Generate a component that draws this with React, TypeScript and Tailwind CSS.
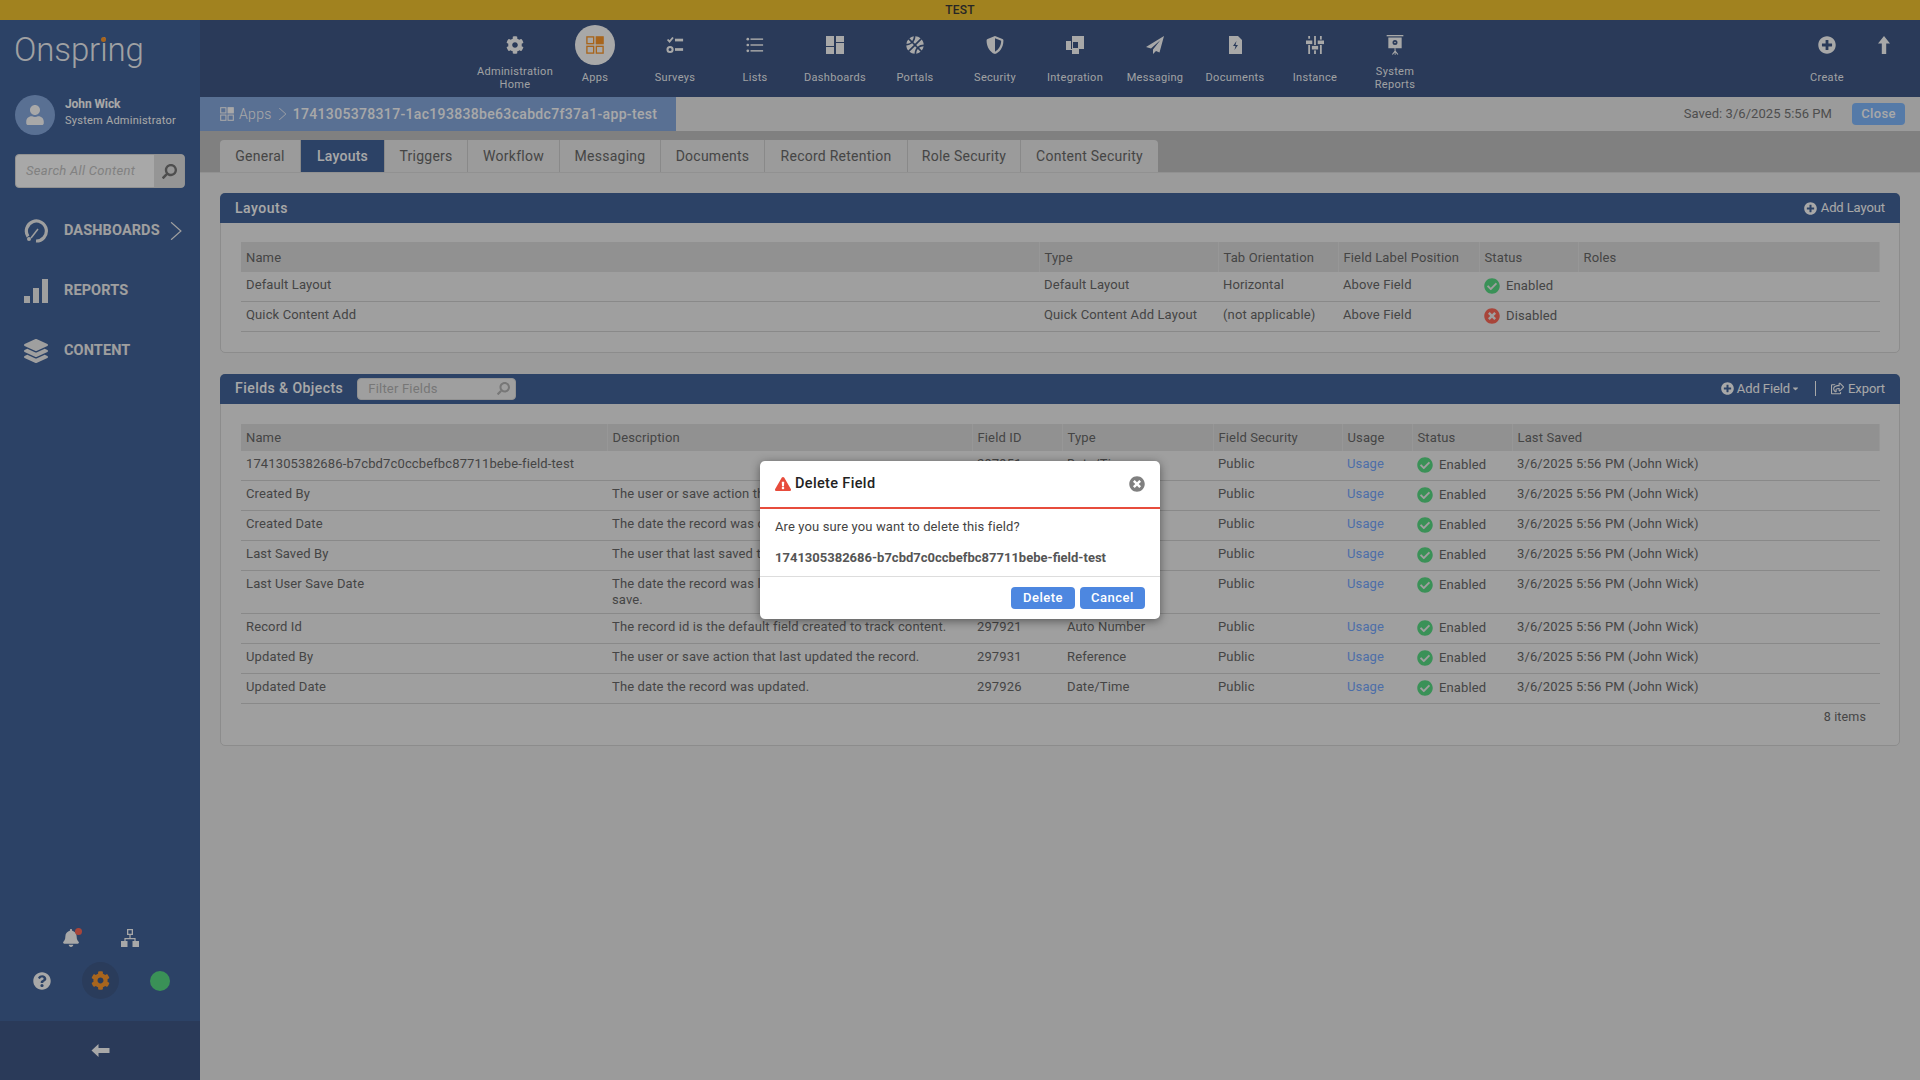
import React from "react";
import {
  FaCog, FaBell, FaQuestionCircle, FaPlusCircle, FaTimesCircle, FaCheckCircle,
  FaExclamationTriangle, FaSearch, FaUser, FaLayerGroup, FaBasketballBall,
  FaShieldAlt, FaRegShareSquare, FaCaretDown,
} from "react-icons/fa";

const Surveys = () => (
  <svg width="18" height="18" viewBox="0 0 20 20" fill="currentColor">
    <path d="M1 4.500l1.600-1.300 1.300 1.500L7 1l1.600 1.300-4.600 5.400z" />
    <rect x="10" y="3" width="9" height="3" />
    <path fillRule="evenodd" d="M4.500 11a4 4 0 110 8 4 4 0 010-8zm0 2.300a1.700 1.700 0 100 3.400 1.700 1.700 0 000-3.400z" />
    <rect x="10" y="13.500" width="9" height="3" />
  </svg>
);
const Lists = () => (
  <svg width="18" height="18" viewBox="0 0 20 20" fill="currentColor">
    <circle cx="2" cy="3.500" r="1.500" /><rect x="5" y="2.700" width="14" height="1.600" />
    <circle cx="2" cy="10" r="1.500" /><rect x="5" y="9.200" width="14" height="1.600" />
    <circle cx="2" cy="16.500" r="1.500" /><rect x="5" y="15.700" width="14" height="1.600" />
  </svg>
);
const Dash = () => (
  <svg width="18" height="18" viewBox="0 0 18 18" fill="currentColor">
    <rect x="0" y="0" width="8" height="10" /><rect x="0" y="11" width="8" height="7" />
    <rect x="10" y="0" width="8" height="6" /><rect x="10" y="7" width="8" height="11" />
  </svg>
);
const Integration = () => (
  <svg width="18" height="18" viewBox="0 0 18 18" fill="currentColor">
    <path d="M6 0h12v13h-5V5H6z" />
    <path d="M0 5h5v8h8v5H6v-4H0z" />
    <path fillRule="evenodd" d="M6 5h7v8H6zM7 6v6h5V6z" />
  </svg>
);
const Plane = () => (
  <svg width="18" height="18" viewBox="0 0 18 18" fill="currentColor">
    <path d="M18 0L0 11l5 1.500L14.500 4 7 13.500V18l3-3 3.500 1.500z" />
  </svg>
);
const Doc = () => (
  <svg width="13" height="18" viewBox="0 0 13 18" fill="currentColor">
    <path fillRule="evenodd" d="M0 0h9l4 4v14H0zM7.500 5L4 10h2.500L5.500 14 9 9H6.500z" />
  </svg>
);
const Sliders = () => (
  <svg width="18" height="18" viewBox="0 0 20 20" fill="currentColor">
    <rect x="2.500" y="0" width="2" height="3" /><rect x="0" y="5" width="7" height="4" /><rect x="2.500" y="10" width="2" height="10" />
    <rect x="9" y="0" width="2" height="10" /><rect x="6.500" y="11" width="7" height="4" /><rect x="9" y="16" width="2" height="4" />
    <rect x="15.500" y="0" width="2" height="4" /><rect x="13" y="5" width="7" height="4" /><rect x="15.500" y="10" width="2" height="10" />
  </svg>
);
const Report = () => (
  <svg width="18" height="20" viewBox="0 0 20 24" fill="currentColor">
    <rect x="0" y="0" width="20" height="1.600" />
    <path fillRule="evenodd" d="M2 3h16v13H2zM10 6a3 3 0 100 6 3 3 0 000-6zM10 8a1 1 0 110 2 1 1 0 010-2z" />
    <path d="M9.300 16h1.400v3l3.300 4-1 .7-2.300-2.700-.1 3h-.9l-.1-3-2.300 2.700-1-.7 3.300-4z" />
  </svg>
);
const AppsIcon = ({ size = 18, fill = "#ff9a2c" }: { size?: number; fill?: string }) => (
  <svg width={size} height={size} viewBox="0 0 20 20" fill="none" stroke={fill} strokeWidth="1.500">
    <rect x="1" y="1" width="7.500" height="7.500" />
    <rect x="11.500" y="1" width="7.500" height="7.500" fill={fill} />
    <rect x="1" y="11.500" width="7.500" height="7.500" />
    <rect x="11.500" y="11.500" width="7.500" height="7.500" />
  </svg>
);
const ArrowUp = () => (
  <svg width="12" height="18" viewBox="0 0 12 18" fill="currentColor"><path d="M6 0l6 7.500H8.200V18H3.800V7.500H0z" /></svg>
);
const Gauge = () => (
  <svg width="24" height="24" viewBox="0 0 24 24" fill="none" stroke="currentColor" strokeWidth="3.200">
    <path d="M4 17.500A10 10 0 1112 22" />
    <path d="M7 19l7-9" strokeWidth="1.500" />
    <circle cx="5" cy="20" r="2" fill="currentColor" stroke="none" />
  </svg>
);
const Bars = () => (
  <svg width="24" height="24" viewBox="0 0 24 24" fill="currentColor">
    <rect x="0" y="17" width="6" height="7" /><rect x="9" y="9" width="6" height="15" /><rect x="18" y="0" width="6" height="24" />
  </svg>
);
const OrgChart = () => (
  <svg width="18" height="18" viewBox="0 0 18 18" fill="currentColor">
    <path fillRule="evenodd" d="M6 0h6v6H6zM7.300 1.300v3.400h3.400V1.300z" />
    <path d="M8.400 6h1.200v3h5v3h-1.200v-1.800H4.600V12H3.400V9h5z" />
    <rect x="0" y="12" width="6.500" height="6" /><rect x="11.500" y="12" width="6.500" height="6" />
  </svg>
);
const Chevron = ({ size = 16 }: { size?: number }) => (
  <svg width={size / 2 + 3} height={size} viewBox="0 0 11 16" fill="none" stroke="currentColor" strokeWidth="1.100"><path d="M1 0l9 8-9 8" /></svg>
);

const navItems: [React.ReactNode, string[]][] = [
  [<FaCog size={18} />, ["Administration", "Home"]],
  [<span className="flex h-10 w-10 -my-2.5 items-center justify-center rounded-full bg-white"><AppsIcon /></span>, ["Apps"]],
  [<Surveys />, ["Surveys"]],
  [<Lists />, ["Lists"]],
  [<Dash />, ["Dashboards"]],
  [<FaBasketballBall size={18} />, ["Portals"]],
  [<FaShieldAlt size={18} />, ["Security"]],
  [<Integration />, ["Integration"]],
  [<Plane />, ["Messaging"]],
  [<Doc />, ["Documents"]],
  [<Sliders />, ["Instance"]],
  [<Report />, ["System", "Reports"]],
];

const NavItem = ({ icon, label, w = "w-[80px]" }: { icon: React.ReactNode; label: string[]; w?: string }) => (
  <div className={`flex ${w} shrink-0 flex-col items-center`}>
    <div className="flex h-[50px] items-center justify-center text-white">{icon}</div>
    <div className="-mt-[6px] flex h-[27px] flex-col justify-center text-center text-[11px] leading-[13px] tracking-[.3px] text-white/95">
      {label.map((l) => <span key={l}>{l}</span>)}
    </div>
  </div>
);

const tabs: [string, string][] = [
  ["General", "w-[81px]"], ["Layouts", "w-[84px]"], ["Triggers", "w-[83px]"], ["Workflow", "w-[92px]"],
  ["Messaging", "w-[101px]"], ["Documents", "w-[104px]"], ["Record Retention", "w-[143px]"],
  ["Role Security", "w-[113px]"], ["Content Security", "w-[137px]"],
];

const Status = ({ ok = true }: { ok?: boolean }) => (
  <span className="flex items-center gap-[6px] pt-[1px]">
    {ok ? <FaCheckCircle size={16} className="text-[#58dc85]" /> : <FaTimesCircle size={16} className="text-[#ff6958]" />}
    <span>{ok ? "Enabled" : "Disabled"}</span>
  </span>
);

const Th = ({ children }: { children?: React.ReactNode }) => (
  <th className="border-r border-[#e6e6e6] bg-[#dddddd] px-[5px] pt-[1px] text-left align-middle font-normal">{children}</th>
);
const Td = ({ children }: { children?: React.ReactNode }) => (
  <td className="px-[5px] py-[5px] align-top">{children}</td>
);

const fields: string[][] = [
  ["1741305382686-b7cbd7c0ccbefbc87711bebe-field-test", "", "297951", "Date/Time"],
  ["Created By", "The user or save action that created the record.", "297916", "Reference"],
  ["Created Date", "The date the record was created.", "297911", "Date/Time"],
  ["Last Saved By", "The user that last saved the record.", "297936", "Reference"],
  ["Last User Save Date", "The date the record was last updated by a user initiated save.", "297941", "Date/Time"],
  ["Record Id", "The record id is the default field created to track content.", "297921", "Auto Number"],
  ["Updated By", "The user or save action that last updated the record.", "297931", "Reference"],
  ["Updated Date", "The date the record was updated.", "297926", "Date/Time"],
];

const tableCls = "w-[1639px] table-fixed border-collapse text-[13px] leading-4 tracking-[.13px] text-[#696969]";

export default function App() {
  return (
    <div className="relative flex h-[1080px] w-[1920px] flex-col overflow-hidden bg-[#ebebeb] font-['Roboto',sans-serif]">
      <div className="flex h-[20px] shrink-0 items-center justify-center bg-[#f5c530] text-[12px] font-medium tracking-[.2px] text-[#3a3a3a]">TEST</div>
      <div className="flex min-h-0 flex-1">
        {/* Sidebar */}
        <aside className="flex w-[200px] shrink-0 flex-col bg-[#44659b] text-white">
          <div className="relative ml-[14px] mt-[8px] h-[44px] text-[33px] font-light leading-[44px] tracking-[-.1px] text-white/95">
            Onspring
            <span className="absolute left-[87px] top-[9px] h-[5px] w-[5px] rounded-full bg-[#ff9a2c]" />
          </div>
          <div className="ml-[15px] mt-[23px] flex items-center">
            <span className="flex h-10 w-10 items-center justify-center rounded-full bg-[#88aae0]"><FaUser size={20} /></span>
            <div className="ml-[10px] -mt-[7px]">
              <div className="text-[12px] font-bold leading-[18px] tracking-[-.1px]">John Wick</div>
              <div className="text-[11px] leading-[16px] tracking-[.25px]">System Administrator</div>
            </div>
          </div>
          <div className="ml-[15px] mt-[19px] flex h-[34px] w-[170px] overflow-hidden rounded-[4px] border border-[#dddddd] bg-white">
            <span className="flex-1 pl-[10px] text-[13px] italic leading-[32px] tracking-[.3px] text-[#c4c4c4]">Search All Content</span>
            <span className="flex w-[30px] items-center justify-center bg-[#e2e2e2] text-[#777777]"><FaSearch size={15} className="-scale-x-100" /></span>
          </div>
          <nav className="mt-[31px] flex flex-col gap-[36px] text-[14.500px] font-bold leading-[24px] tracking-[.1px] text-[#f2f2f2]">
            <div className="flex h-[24px] items-center pl-[24px]"><Gauge /><span className="ml-[16px]">DASHBOARDS</span><span className="ml-[10px]"><Chevron size={18} /></span></div>
            <div className="flex h-[24px] items-center pl-[24px]"><Bars /><span className="ml-[16px]">REPORTS</span></div>
            <div className="flex h-[24px] items-center pl-[24px]"><FaLayerGroup size={24} /><span className="ml-[16px]">CONTENT</span></div>
          </nav>
          <div className="mt-auto flex flex-col">
            <div className="flex justify-center gap-[41px]">
              <span className="relative"><FaBell size={18} /><span className="absolute -right-[2px] -top-[1px] h-[7px] w-[7px] rounded-full bg-[#ff6958]" /></span>
              <OrgChart />
            </div>
            <div className="mb-[22px] mt-[15px] flex items-center justify-center gap-[31px] pl-[2px]">
              <FaQuestionCircle size={18} />
              <span className="flex h-[37px] w-[37px] items-center justify-center rounded-full bg-[#405b8b] text-[#ff9a2c]"><FaCog size={19} /></span>
              <span className="h-5 w-5 rounded-full bg-[#58dc85]" />
            </div>
            <div className="flex h-[59px] items-center justify-center bg-[#405988]">
              <svg width="19" height="13" viewBox="0 0 18 13" fill="currentColor"><path d="M0 6.500L7 0v4h11v5H7v4z" /></svg>
            </div>
          </div>
        </aside>

        {/* Main */}
        <main className="flex min-w-0 flex-1 flex-col">
          <div className="flex h-[77px] shrink-0 bg-[#405988] pl-[275px]">
            {navItems.map(([icon, label]) => <NavItem key={label[0]} icon={icon} label={label} />)}
            <div className="ml-[362px]"><NavItem w="w-[60px]" icon={<FaPlusCircle size={18} />} label={["Create"]} /></div>
            <div className="ml-[2px]"><NavItem w="w-[50px]" icon={<ArrowUp />} label={[""]} /></div>
          </div>

          <div className="flex h-[34px] shrink-0 items-center bg-[#ececec]">
            <div className="flex h-full w-[476px] items-center bg-[#88aae0] pl-[20px] text-[14px] leading-[34px] tracking-[.33px] text-white">
              <AppsIcon size={14} fill="#ffffff" />
              <span className="ml-[5px] font-light">Apps</span>
              <span className="mx-[6px]"><Chevron size={12} /></span>
              <span className="font-medium">1741305378317-1ac193838be63cabdc7f37a1-app-test</span>
            </div>
            <span className="ml-auto text-[13px] tracking-[.05px] text-[#777777]">Saved: 3/6/2025 5:56 PM</span>
            <span className="ml-[20px] mr-[15px] flex h-[22px] w-[53px] items-center justify-center rounded-[4px] bg-[#81b9ff] text-[13px] font-medium tracking-[.3px] text-white">Close</span>
          </div>

          <div className="flex h-[42px] shrink-0 items-end border-b border-[#dddddd] bg-[#c2c2c2] pl-[20px]">
            <div className="flex h-[32px] overflow-hidden rounded-t-[4px]">
              {tabs.map(([t, w]) =>
                <div key={t} className={`flex h-[32px] items-center justify-center border-r border-[#d0d0d0] text-[14px] tracking-[.25px] last:border-r-0 ${w} ${t === "Layouts" ? "bg-[#44659b] font-medium text-white" : "bg-[#ebebeb] text-[#6a6a6a]"}`}>{t}</div>
              )}
            </div>
          </div>

          <div className="flex-1 px-[20px] pt-[20px]">
            {/* Layouts */}
            <section className="rounded-[5px] border border-[#d5d5d5] bg-[#f2f2f2]">
              <div className="-m-px flex h-[30px] items-center justify-between rounded-t-[5px] bg-[#44659b] pl-[15px] pr-[15px] text-white">
                <span className="text-[14px] font-medium tracking-[.5px]">Layouts</span>
                <span className="flex items-center gap-[4px] text-[13px] tracking-[-.1px]"><FaPlusCircle size={13} />Add Layout</span>
              </div>
              <div className="px-[20px] pb-[20px] pt-[20px]">
                <table className={tableCls}>
                  <colgroup>
                    <col className="w-[798px]" /><col className="w-[179px]" /><col className="w-[120px]" /><col className="w-[141px]" /><col className="w-[99px]" /><col />
                  </colgroup>
                  <thead><tr className="h-[30px]"><Th>Name</Th><Th>Type</Th><Th>Tab Orientation</Th><Th>Field Label Position</Th><Th>Status</Th><Th>Roles</Th></tr></thead>
                  <tbody>
                    <tr className="h-[29px] border-b border-[#d1d1d1]"><Td>Default Layout</Td><Td>Default Layout</Td><Td>Horizontal</Td><Td>Above Field</Td><Td><Status /></Td><Td /></tr>
                    <tr className="h-[30px] border-b border-[#d1d1d1]"><Td>Quick Content Add</Td><Td>Quick Content Add Layout</Td><Td>(not applicable)</Td><Td>Above Field</Td><Td><Status ok={false} /></Td><Td /></tr>
                  </tbody>
                </table>
              </div>
            </section>

            {/* Fields */}
            <section className="mt-[21px] rounded-[5px] border border-[#d5d5d5] bg-[#f2f2f2]">
              <div className="-m-px flex h-[30px] items-center rounded-t-[5px] bg-[#44659b] pl-[15px] pr-[15px] text-white">
                <span className="text-[14px] font-medium tracking-[.45px]">Fields &amp; Objects</span>
                <span className="ml-[14px] flex h-[22px] w-[159px] items-center justify-between rounded-[4px] border border-[#dddddd] bg-[#f2f2f2] pl-[10px] pr-[5px] text-[13px] tracking-[.2px] text-[#b5b5b5]">Filter Fields<FaSearch size={13} className="-scale-x-100" /></span>
                <span className="ml-auto flex items-center gap-[2px] text-[13px] tracking-[-.1px]"><FaPlusCircle size={13} className="mr-[1px]" />Add Field<FaCaretDown size={9} className="-ml-[1px]" /></span>
                <span className="ml-[15px] mr-[15px] h-[15px] w-px bg-white" />
                <span className="flex items-center gap-[4px] text-[13px] tracking-[-.1px]"><FaRegShareSquare size={13} />Export</span>
              </div>
              <div className="px-[20px] pt-[21px]">
                <table className={tableCls}>
                  <colgroup>
                    <col className="w-[366px]" /><col className="w-[365px]" /><col className="w-[90px]" /><col className="w-[151px]" /><col className="w-[129px]" /><col className="w-[70px]" /><col className="w-[100px]" /><col />
                  </colgroup>
                  <thead><tr className="h-[27px]"><Th>Name</Th><Th>Description</Th><Th>Field ID</Th><Th>Type</Th><Th>Field Security</Th><Th>Usage</Th><Th>Status</Th><Th>Last Saved</Th></tr></thead>
                  <tbody>
                    {fields.map((f) => (
                      <tr key={f[0]} className="h-[30px] border-b border-[#d1d1d1]">
                        <Td>{f[0]}</Td><Td>{f[1]}</Td><Td>{f[2]}</Td><Td>{f[3]}</Td><Td>Public</Td>
                        <Td><span className="text-[#75a8ff]">Usage</span></Td><Td><Status /></Td><Td>3/6/2025 5:56 PM (John Wick)</Td>
                      </tr>
                    ))}
                  </tbody>
                </table>
                <div className="h-[41px] pr-[13px] pt-[5px] text-right text-[12.500px] leading-4 tracking-[.13px] text-[#696969]">8 items</div>
              </div>
            </section>
          </div>
        </main>
      </div>

      {/* Backdrop */}
      <div className="absolute inset-0 bg-black/[.34]" />

      {/* Modal */}
      <div className="absolute left-[760px] top-[461px] flex h-[158px] w-[400px] flex-col rounded-[5px] bg-white shadow-[0_2px_10px_rgba(0,0,0,.45)]">
        <div className="flex h-[48px] shrink-0 items-center border-b-2 border-[#e74c3c] pl-[15px] pr-[15px]">
          <FaExclamationTriangle size={16} className="text-[#e74c3c]" />
          <span className="ml-[4px] text-[14.500px] font-medium tracking-[.35px] text-[#222222]">Delete Field</span>
          <FaTimesCircle size={16} className="ml-auto text-[#808080]" />
        </div>
        <div className="shrink-0 px-[15px] pt-[9px] text-[13px] tracking-[.12px] text-[#444444]">
          <div className="leading-[18px]">Are you sure you want to delete this field?</div>
          <div className="mt-[13px] font-bold leading-[18px] tracking-normal text-[#555555]">1741305382686-b7cbd7c0ccbefbc87711bebe-field-test</div>
        </div>
        <div className="mt-auto flex h-[43px] items-start justify-end gap-[5px] border-t border-[#dddddd] pr-[15px] pt-[10px]">
          <span className="flex h-[22px] w-[64px] items-center justify-center rounded-[4px] bg-[#4d87e0] text-[13px] font-medium tracking-[.5px] text-white">Delete</span>
          <span className="flex h-[22px] w-[65px] items-center justify-center rounded-[4px] bg-[#4d87e0] text-[13px] font-medium tracking-[.5px] text-white">Cancel</span>
        </div>
      </div>
    </div>
  );
}
